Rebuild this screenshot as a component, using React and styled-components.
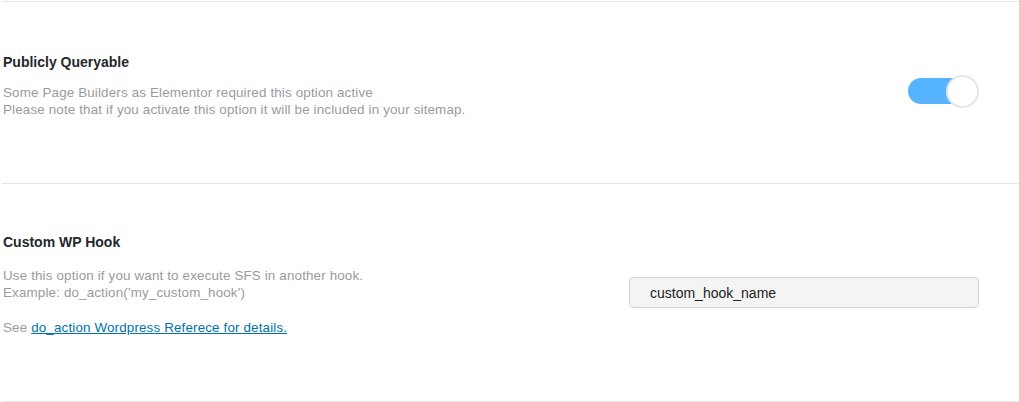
import React from "react";
import styled, { createGlobalStyle } from "styled-components";

const GlobalStyle = createGlobalStyle`
  body {
    margin: 0;
    background: #ffffff;
    font-family: "Liberation Sans", Arial, sans-serif;
  }
`;

const App = () => {
  return (
    <>
      <GlobalStyle />
      <Page>
        <Section top={50} bottom={65}>
          <Info>
            <Title>Publicly Queryable</Title>
            <Description gap={12}>
              Some Page Builders as Elementor required this option active
              <br />
              Please note that if you activate this option it will be included in your sitemap.
            </Description>
          </Info>
          <Control offset={23}>
            <Switch aria-checked="true" role="switch">
              <Knob />
            </Switch>
          </Control>
        </Section>
        <Section top={48} bottom={65}>
          <Info>
            <Title>Custom WP Hook</Title>
            <Description gap={15}>
              Use this option if you want to execute SFS in another hook.
              <br />
              Example: do_action('my_custom_hook')
            </Description>
            <Note>
              See <DocLink href="#">do_action Wordpress Referece for details.</DocLink>
            </Note>
          </Info>
          <Control offset={45}>
            <HookInput defaultValue="custom_hook_name" />
          </Control>
        </Section>
      </Page>
    </>
  );
};

export default App;

const Page = styled.div`
  padding: 1px 0 0 2px;
  width: 1017px;
`;

const Section = styled.section`
  display: flex;
  align-items: flex-start;
  justify-content: space-between;
  border-top: 1px solid #e8e8e8;
  padding: ${({ top }) => top}px 40px ${({ bottom }) => bottom}px 1px;

  &:last-child {
    border-bottom: 1px solid #e8e8e8;
  }
`;

const Info = styled.div`
  flex: 1 1 auto;
`;

const Title = styled.h3`
  margin: 0;
  font-size: 14px;
  line-height: 20px;
  font-weight: 700;
  color: #23282d;
`;

const Description = styled.p`
  margin: ${({ gap }) => gap}px 0 0;
  font-size: 13.4px;
  letter-spacing: 0.15px;
  line-height: 17px;
  color: #9b9b9b;
`;

const Note = styled.p`
  margin: 18px 0 0;
  font-size: 13.4px;
  letter-spacing: 0.15px;
  line-height: 17px;
  color: #9b9b9b;
`;

const DocLink = styled.a`
  color: #0073aa;
  text-decoration: underline;
`;

const Control = styled.div`
  flex: 0 0 auto;
  margin-top: ${({ offset }) => offset}px;
`;

const Switch = styled.div`
  position: relative;
  width: 66px;
  height: 26px;
  margin: 3px 5px 3px 0;
  border-radius: 13px;
  background: #56b4ff;
`;

const Knob = styled.span`
  position: absolute;
  top: -3px;
  right: -5px;
  width: 29px;
  height: 29px;
  border-radius: 50%;
  background: #ffffff;
  border: 2px solid #e6e6e6;
`;

const HookInput = styled.input`
  box-sizing: border-box;
  width: 350px;
  height: 31px;
  padding: 0 20px;
  border: 1px solid #d6d6d6;
  border-radius: 4px;
  background: #f4f4f4;
  font-family: "Liberation Sans", Arial, sans-serif;
  font-size: 14px;
  color: #222222;
  outline: none;
`;
